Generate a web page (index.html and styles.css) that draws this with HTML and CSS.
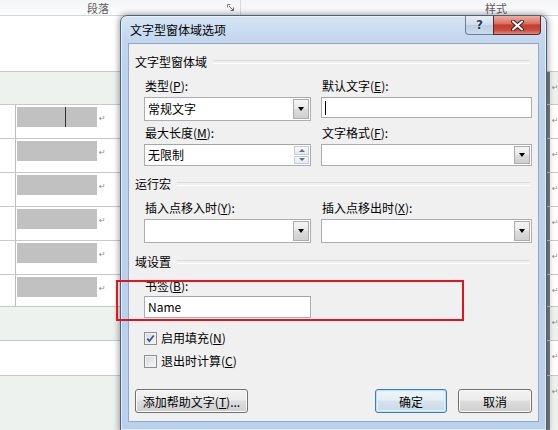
FILE: index.html
```html
<!DOCTYPE html>
<html lang="zh-CN">
<head>
<meta charset="utf-8">
<title>文字型窗体域选项</title>
<link rel="stylesheet" href="styles.css">
</head>
<body>
<div class="ribbon">
  <div class="rg rg1">
    <span class="rlabel">段落</span>
    <svg class="launcher" width="8" height="8" viewBox="0 0 8 8"><path d="M0.5 3.5V0.5H3.5" stroke="#7a7a7a" fill="none"/><path d="M2 2L6.5 6.5M6.5 3.5V6.5H3.5" stroke="#6a6a6a" fill="none"/></svg>
  </div>
  <div class="rg rg2"><span class="rlabel">样式</span></div>
</div>

<div class="page">
  <div class="blank"></div>
  <div class="trow band h33"><div class="c-main"></div><div class="c-right"><span class="mk">↵</span></div></div>
  <div class="trow h34"><div class="c-left"></div><div class="c-main"><div class="blk"><i class="caret-doc"></i></div><span class="mk">↵</span></div><div class="c-right"><span class="mk">↵</span></div></div>
  <div class="trow h34"><div class="c-left"></div><div class="c-main"><div class="blk"></div><span class="mk">↵</span></div><div class="c-right"><span class="mk">↵</span></div></div>
  <div class="trow h34"><div class="c-left"></div><div class="c-main"><div class="blk"></div><span class="mk">↵</span></div><div class="c-right"><span class="mk">↵</span></div></div>
  <div class="trow h34"><div class="c-left"></div><div class="c-main"><div class="blk"></div><span class="mk">↵</span></div><div class="c-right"><span class="mk">↵</span></div></div>
  <div class="trow h34"><div class="c-left"></div><div class="c-main"><div class="blk"></div><span class="mk">↵</span></div><div class="c-right"><span class="mk">↵</span></div></div>
  <div class="trow h32"><div class="c-left"></div><div class="c-main"><div class="blk"></div><span class="mk">↵</span></div><div class="c-right"><span class="mk">↵</span></div></div>
  <div class="trow band h34"><div class="c-main"></div><div class="c-right"><span class="mk">↵</span></div></div>
  <div class="trow h35"><div class="c-main"></div><div class="c-right"><span class="mk">↵</span></div></div>
  <div class="trow band h60"><div class="c-main"></div><div class="c-right"><span class="mk">↵</span></div></div>
</div>

<div class="dlg">
  <div class="tbar">
    <span class="ttl">文字型窗体域选项</span>
    <div class="cbtns">
      <div class="cb help">?</div>
      <div class="cb close">
        <svg width="13" height="11" viewBox="0 0 13 11"><path d="M2 1.5L11 9.5M11 1.5L2 9.5" stroke="#4a1d18" stroke-width="4" stroke-linecap="round"/><path d="M2 1.5L11 9.5M11 1.5L2 9.5" stroke="#fff" stroke-width="2" stroke-linecap="round"/></svg>
      </div>
    </div>
  </div>
  <div class="client">
    <div class="gt">文字型窗体域</div>
    <div class="grid g1">
      <div class="fld">
        <div class="lbl">类型(<u>P</u>):</div>
        <div class="combo"><span class="val">常规文字</span><span class="dd"><i class="tri"></i></span></div>
      </div>
      <div class="fld">
        <div class="lbl">默认文字(<u>E</u>):</div>
        <div class="tbox h21"><i class="caret"></i></div>
      </div>
      <div class="fld">
        <div class="lbl">最大长度(<u>M</u>):</div>
        <div class="tbox h22 spinbox"><span class="val">无限制</span>
          <span class="spin"><span class="sp"><i class="up"></i></span><span class="sp"><i class="dn"></i></span></span>
        </div>
      </div>
      <div class="fld">
        <div class="lbl">文字格式(<u>F</u>):</div>
        <div class="combo h22"><span class="dd"><i class="tri"></i></span></div>
      </div>
    </div>

    <div class="gt g2t">运行宏</div>
    <div class="grid g3">
      <div class="fld">
        <div class="lbl">插入点移入时(<u>Y</u>):</div>
        <div class="combo"><span class="dd"><i class="tri"></i></span></div>
      </div>
      <div class="fld">
        <div class="lbl">插入点移出时(<u>X</u>):</div>
        <div class="combo"><span class="dd"><i class="tri"></i></span></div>
      </div>
    </div>

    <div class="gt g3t">域设置</div>
    <div class="grid g4">
      <div class="fld">
        <div class="lbl lb2">书签(<u>B</u>):</div>
        <div class="tbox h22 name"><span class="val">Name</span></div>
      </div>
    </div>

    <div class="chk c1">
      <span class="box"><svg width="9" height="9" viewBox="0 0 9 9"><path d="M1.3 4.6L3.4 7.1L7.7 1.4" stroke="#3c5690" stroke-width="1.7" fill="none"/></svg></span>
      <span>启用填充(<u>N</u>)</span>
    </div>
    <div class="chk c2">
      <span class="box"></span>
      <span>退出时计算(<u>C</u>)</span>
    </div>

    <div class="btns">
      <button class="btn bhelp">添加帮助文字(<u>T</u>)...</button>
      <button class="btn ok">确定</button>
      <button class="btn cancel">取消</button>
    </div>
  </div>
</div>

<div class="annot"></div>
</body>
</html>
```

FILE: styles.css
```css
* { box-sizing: border-box; }
html, body { margin: 0; padding: 0; }
body {
  width: 558px;
  height: 430px;
  overflow: hidden;
  position: relative;
  background: #fff;
  font-family: "Noto Sans CJK SC", "Noto Sans", sans-serif;
  font-size: 12px;
  color: #000;
}

/* ---------- background document ---------- */
.ribbon {
  height: 16px;
  border-bottom: 1px solid #d3d6da;
  background: linear-gradient(#f3f5f7, #fdfdfe);
  display: flex;
}
.rg { height: 15px; display: flex; align-items: flex-start; }
.rg1 { width: 241px; border-right: 1px solid #d9dcdf; padding-left: 87px; }
.rg2 { flex: 1; padding-left: 244px; }
.rlabel {
  display: block;
  font-size: 11px;
  line-height: 14px;
  padding-top: 1px;
  color: #5d5d5d;
}
.launcher { margin-left: auto; margin-right: 5px; margin-top: 4px; }

.blank { height: 55px; }
.trow { display: flex; border-top: 1px solid #c7c8c8; }
.band { background: #eef2ef; }
.h32 { height: 32px; }
.h33 { height: 33px; }
.h34 { height: 34px; }
.h35 { height: 35px; }
.h60 { height: 60px; }
.c-left { width: 16px; border-right: 1px solid #bdbdbd; }
.c-main { flex: 1; display: flex; align-items: flex-start; padding-top: 2px; }
.blk {
  width: 80px;
  height: 20px;
  background: #c1c1c1;
  margin-left: 1px;
  position: relative;
}
.caret-doc {
  display: block;
  width: 1px;
  height: 20px;
  background: #333;
  margin-left: 48px;
}
.mk {
  font-family: "DejaVu Sans", sans-serif;
  font-size: 8px;
  line-height: 8px;
  color: #8a8a8a;
  margin: 8px 0 0 2px;
}
.c-right {
  width: 13px;
  border-left: 5px solid #7e8183;
  padding-left: 2px;
  padding-top: 8px;
  display: flex;
  align-items: flex-start;
}
.c-right .mk { margin: 4px 0 0 0; }

/* ---------- dialog window ---------- */
.dlg {
  position: absolute;
  left: 120px;
  top: 15px;
  width: 427px;
  height: 416px;
  border: 1px solid #4f6178;
  border-radius: 7px 7px 0 0;
  background: linear-gradient(180deg, #d6e5f5 0, #c2d7ee 24px, #bbd2eb 60px, #b9d1ea 100%);
  box-shadow: 0 0 6px 1px rgba(0, 0, 0, .38), inset 0 0 0 1px rgba(255, 255, 255, .55);
  padding: 0 7px 8px;
  display: flex;
  flex-direction: column;
}
.tbar { height: 27px; flex: none; display: flex; align-items: flex-start; }
.ttl { line-height: 27px; padding-left: 2px; }
.cbtns { margin-left: auto; margin-right: -2px; display: flex; }
.cb {
  height: 19px;
  display: flex;
  align-items: center;
  justify-content: center;
}
.help {
  width: 28px;
  border: 1px solid #6c7f98;
  border-top: none;
  border-right: none;
  border-radius: 0 0 0 4px;
  background: linear-gradient(#e6eef7, #d0ddec 48%, #bccee4 52%, #cadbee);
  color: #2b3d58;
  font-family: "DejaVu Sans", sans-serif;
  font-weight: bold;
  font-size: 12px;
  text-shadow: 0 0 2px #fff;
}
.close {
  width: 48px;
  border: 1px solid #5b2722;
  border-top: none;
  border-radius: 0 0 4px 0;
  background: linear-gradient(#eab0a6 0, #da7162 42%, #c63d2e 50%, #c84a3b 78%, #df8b7e 100%);
}

.client {
  flex: 1;
  background: #f0f0f0;
  border: 1px solid #93a8c3;
  padding-top: 10px;
  display: flex;
  flex-direction: column;
}

.gt {
  display: flex;
  align-items: center;
  height: 16px;
  line-height: 16px;
  padding-left: 6px;
  margin-right: 8px;
  flex: none;
}
.gt::after {
  content: "";
  flex: 1;
  height: 2px;
  border-top: 1px solid #d8dcdf;
  border-bottom: 1px solid #fff;
  margin-left: 6px;
}
.g2t { margin-top: 10px; }
.g3t { margin-top: 11px; }

.grid {
  display: grid;
  grid-template-columns: 167px 211px;
  column-gap: 10px;
  row-gap: 4px;
  margin-left: 15px;
  margin-top: 8px;
  flex: none;
}
.fld { display: flex; flex-direction: column; align-items: stretch; }
.lbl { height: 16px; line-height: 16px; padding-left: 1px; margin-bottom: 3px; }
.lb2 { margin-bottom: 2px; }
u { text-decoration: underline; text-underline-offset: 1px; }

.combo {
  height: 24px;
  border: 1px solid #abadb3;
  background: #fff;
  display: flex;
  align-items: stretch;
  padding: 1px;
}
.combo.h22 { height: 22px; }
.val { line-height: 20px; padding-left: 2px; }
.combo .val { align-self: center; }
.dd {
  margin-left: auto;
  width: 16px;
  border: 1px solid #acacac;
  background: linear-gradient(#f4f4f4, #e9e9e9 50%, #dcdcdc 50%, #d0d0d0);
  display: flex;
  align-items: center;
  justify-content: center;
}
.tri {
  width: 0;
  height: 0;
  border-left: 3.5px solid transparent;
  border-right: 3.5px solid transparent;
  border-top: 4px solid #000;
}

.tbox {
  border: 1px solid #abadb3;
  border-top-color: #a3a5ab;
  background: #fff;
  display: flex;
  align-items: center;
}
.h21 { height: 21px; }
.h22 { height: 22px; }
.caret { display: block; width: 1px; height: 14px; background: #000; margin-left: 3px; }
.spinbox { padding: 1px; align-items: stretch; }
.spinbox .val { align-self: center; }
.name .val { padding-left: 3px; }
.spin {
  margin-left: auto;
  width: 15px;
  display: flex;
  flex-direction: column;
  gap: 1px;
}
.sp {
  flex: 1;
  border: 1px solid #c4ccd6;
  background: linear-gradient(#f7f9fb, #e6eaef);
  display: flex;
  align-items: center;
  justify-content: center;
}
.up, .dn {
  width: 0;
  height: 0;
  border-left: 3px solid transparent;
  border-right: 3px solid transparent;
}
.up { border-bottom: 3px solid #5a6f8c; }
.dn { border-top: 3px solid #5a6f8c; }

.chk {
  display: flex;
  align-items: center;
  gap: 4px;
  height: 16px;
  line-height: 16px;
  margin-left: 15px;
  flex: none;
}
.c1 { margin-top: 12px; }
.c2 { margin-top: 7px; }
.box {
  width: 13px;
  height: 13px;
  border: 1px solid #8e8f8f;
  background: linear-gradient(135deg, #d5d8dc, #f8f8f8);
  box-shadow: inset 0 0 0 1px #f2f2f2;
  display: flex;
  align-items: center;
  justify-content: center;
}

.btns {
  display: flex;
  margin-top: 20px;
  padding: 0 6px;
  flex: none;
}
.btn {
  height: 24px;
  padding: 0;
  border: 1px solid #707070;
  border-radius: 3px;
  background: linear-gradient(#f2f2f2, #ebebeb 46%, #dddddd 50%, #cfcfcf);
  box-shadow: inset 0 0 0 1px #fbfbfb;
  font: inherit;
  color: #000;
  display: flex;
  align-items: center;
  justify-content: center;
}
.bhelp { width: 113px; }
.ok {
  width: 72px;
  margin-left: auto;
  border-color: #3c7fb1;
  box-shadow: inset 0 0 0 1px #b8e2f9, inset 0 0 0 2px #e3f3fc;
  background: linear-gradient(#eef6fb, #e3eef5 46%, #d6e3ec 50%, #cbd9e3);
}
.cancel { width: 74px; margin-left: 11px; }

/* ---------- red annotation frame ---------- */
.annot {
  position: absolute;
  left: 116px;
  top: 280px;
  width: 348px;
  height: 41px;
  border: 2px solid #e1151d;
}
```
